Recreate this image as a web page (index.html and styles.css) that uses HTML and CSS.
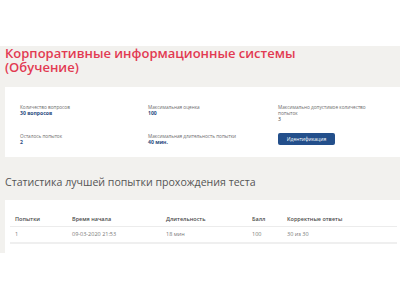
FILE: index.html
```html
<!DOCTYPE html>
<html lang="ru">
<head>
<meta charset="utf-8">
<link rel="stylesheet" href="styles.css">
</head>
<body>
<div class="topbar"></div>
<main class="main">
  <h1 class="title">Корпоративные информационные системы (Обучение)</h1>
  <section class="card info">
    <div class="item">
      <div class="label">Количество вопросов</div>
      <div class="value">30 вопросов</div>
    </div>
    <div class="item">
      <div class="label">Максимальная оценка</div>
      <div class="value">100</div>
    </div>
    <div class="item">
      <div class="label">Максимально допустимое количество<br>попыток</div>
      <div class="value plain">3</div>
    </div>
    <div class="item">
      <div class="label">Осталось попыток</div>
      <div class="value">2</div>
    </div>
    <div class="item">
      <div class="label">Максимальная длительность попытки</div>
      <div class="value">40 мин.</div>
    </div>
    <div class="item">
      <button class="btn">Идентификация</button>
    </div>
  </section>
  <h2 class="subtitle">Статистика лучшей попытки прохождения теста</h2>
  <section class="card stats">
    <table class="table">
      <thead>
        <tr><th class="c1">Попытки</th><th class="c2">Время начала</th><th class="c3">Длительность</th><th class="c4">Балл</th><th>Корректные ответы</th></tr>
      </thead>
      <tbody>
        <tr><td>1</td><td>09-03-2020 21:53</td><td>18 мин</td><td>100</td><td>30 из 30</td></tr>
      </tbody>
    </table>
  </section>
</main>
</body>
</html>
```
FILE: styles.css
```css
* { box-sizing: border-box; }
body {
  margin: 0;
  background: #ffffff;
  font-family: "Open Sans", "Liberation Sans", sans-serif;
}
.topbar { height: 46px; background: #ffffff; }
.main {
  background: #f2f1ee;
  padding: 0 0 0 5px;
  height: 207px;
}
.title {
  margin: 0;
  max-width: 320px;
  padding-top: 0;
  font-size: 13px;
  line-height: 14px;
  font-weight: 600;
  color: #e23a52;
}
.card { background: #ffffff; }
.info {
  margin-top: 13px;
  height: 70px;
  padding: 17px 0 0 15px;
  display: grid;
  grid-template-columns: 128px 130px 1fr;
  align-content: start;
  row-gap: 10px;
  align-items: start;
}
.label {
  font-size: 4.7px;
  line-height: 6px;
  color: #6b6b6b;
}
.value {
  font-size: 5.1px;
  line-height: 7px;
  font-weight: 700;
  color: #2b4c80;
}
.value.plain { font-weight: 400; color: #333; }
.btn {
  display: block;
  width: 57px;
  height: 12px;
  padding: 0;
  border: 0;
  border-radius: 2px;
  background: #234f8b;
  color: #ffffff;
  font-family: inherit;
  font-size: 5px;
  line-height: 12px;
  text-align: center;
}
.subtitle {
  margin: 0;
  padding-top: 18px;
  height: 43px;
  font-size: 10.6px;
  line-height: 14px;
  font-weight: 400;
  color: #555555;
}
.stats {
  padding: 13px 3px 0 5px;
  height: 53px;
}
.table {
  width: 100%;
  border-collapse: collapse;
  font-size: 5.5px;
}
.table th {
  text-align: left;
  font-weight: 600;
  color: #4a4a4a;
  height: 13px;
  padding: 0 0 0 5px;
  border-bottom: 1px solid #ececec;
}
.table td {
  color: #777777;
  height: 17px;
  padding: 0 0 0 5px;
  border-bottom: 2px solid #efefef;
}
.c1 { width: 57px; }
.c2 { width: 94px; }
.c3 { width: 86px; }
.c4 { width: 35px; }
```
